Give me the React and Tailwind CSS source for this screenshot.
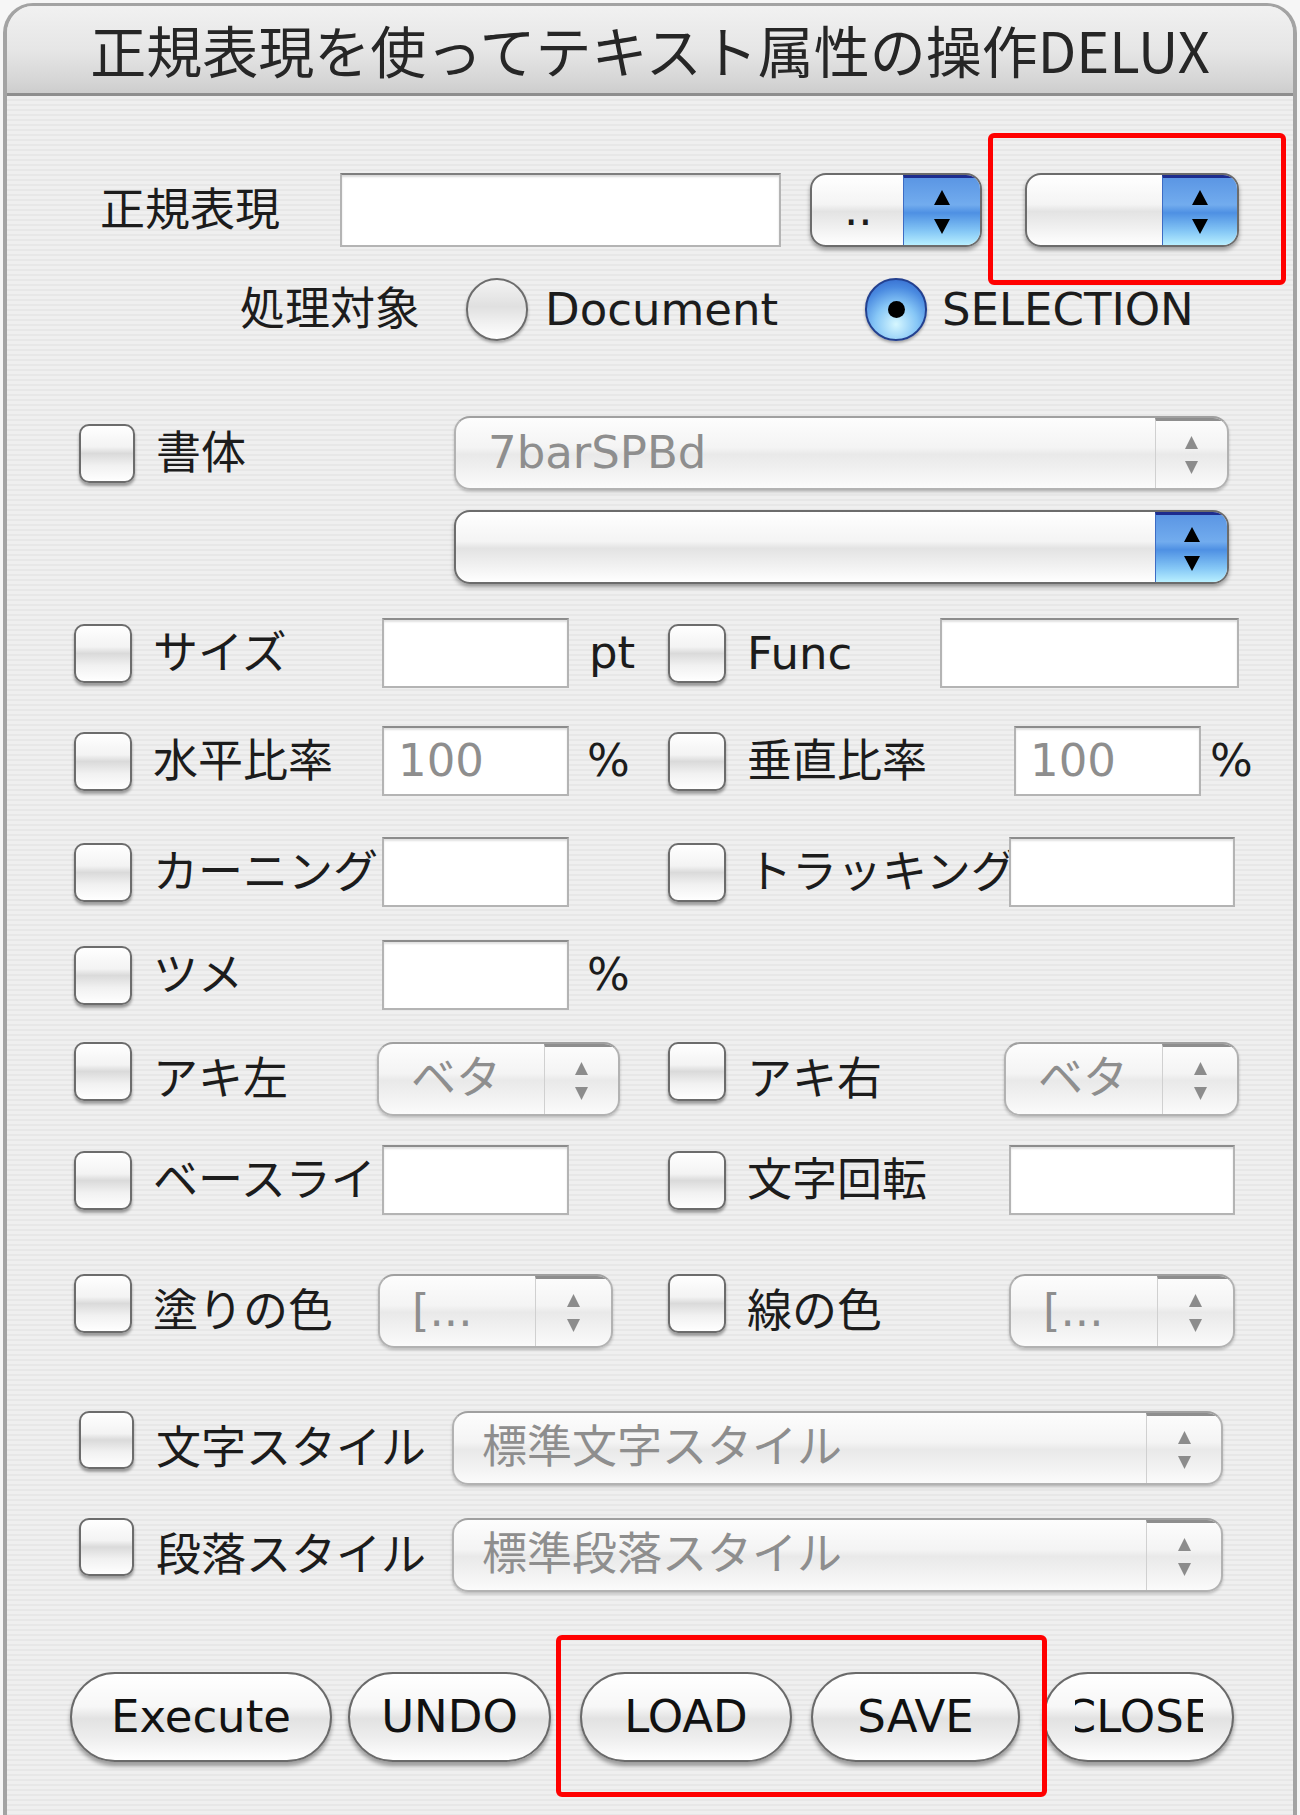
import React from 'react'

const FONT = "font-['DejaVu_Sans','Noto_Sans_CJK_JP',sans-serif]"

function Check({ className = 'w-[58px] h-[59px]', top = false }) {
  return (
    <div
      className={`${className} ${top ? 'self-start' : ''} shrink-0 rounded-[10px] border-2 border-[#6c6c6c] bg-[linear-gradient(180deg,#ffffff_0%,#f3f3f3_38%,#dadada_50%,#f1f1f1_72%,#ffffff_100%)] shadow-[0_3px_3px_rgba(0,0,0,0.35)]`}
    />
  )
}

function Label({ w, children, className = 'ml-[21px]' }) {
  return (
    <div className={`${w} ${className} shrink-0 overflow-hidden whitespace-nowrap text-[45px] leading-[1.4] text-[#1c1c1c]`}>
      {children}
    </div>
  )
}

function Field({ w, value }) {
  return (
    <div
      className={`${w} h-[70px] shrink-0 flex items-center pl-[14px] bg-white border-2 border-[#b4b4b4] border-t-[#8c8c8c] shadow-[inset_0_2px_2px_rgba(0,0,0,0.12)] text-[45px] leading-[1.2] text-[#8e8e8e]`}
    >
      {value}
    </div>
  )
}

function Unit({ children, className }) {
  return <div className={`${className} shrink-0 text-[45px] leading-[1.2] text-[#1c1c1c]`}>{children}</div>
}

function ArrowsActive() {
  return (
    <svg width="18" height="46" viewBox="0 0 18 46">
      <path d="M9 1 L17 16 L1 16 Z" fill="#000" />
      <path d="M1 30 L17 30 L9 45 Z" fill="#000" />
    </svg>
  )
}

function ArrowsDisabled() {
  return (
    <svg width="15" height="42" viewBox="0 0 15 42">
      <path d="M7.5 2 L14 15 L1 15 Z" fill="#8c8c8c" />
      <path d="M1 27 L14 27 L7.5 40 Z" fill="#8c8c8c" />
    </svg>
  )
}

function Popup({ w, text, active = false, arrowW = 'w-[75px]', pad = 'pl-[32px]' }) {
  if (active) {
    return (
      <div
        className={`${w} h-[74px] shrink-0 flex overflow-hidden rounded-[16px] border-2 border-[#6c6c6c] shadow-[0_3px_4px_rgba(0,0,0,0.35)] bg-[linear-gradient(180deg,#ffffff_0%,#f4f4f4_42%,#e3e3e3_52%,#f3f3f3_80%,#ffffff_100%)]`}
      >
        <div className={`flex-1 flex items-center ${pad} text-[45px] leading-[1.3] text-[#1c1c1c] overflow-hidden whitespace-nowrap`}>
          {text}
        </div>
        <div
          className={`${arrowW} shrink-0 flex items-center justify-center border-l border-[#3d6cc4] border-t-[3px] border-t-[#1d2c8e] bg-[linear-gradient(180deg,#5b96e4_0%,#72acee_40%,#4e90e3_52%,#86c8f6_80%,#b8efff_100%)]`}
        >
          <ArrowsActive />
        </div>
      </div>
    )
  }
  return (
    <div
      className={`${w} h-[74px] shrink-0 flex overflow-hidden rounded-[16px] border-2 border-[#b2b2b2] border-t-[#a0a0a0] shadow-[0_2px_3px_rgba(0,0,0,0.2)] bg-[linear-gradient(180deg,#fdfdfd_0%,#f4f4f4_42%,#e9e9e9_52%,#f3f3f3_80%,#fbfbfb_100%)]`}
    >
      <div className={`flex-1 flex items-center ${pad} text-[45px] leading-[1.3] text-[#8e8e8e] overflow-hidden whitespace-nowrap`}>
        {text}
      </div>
      <div className={`${arrowW} shrink-0 flex items-center justify-center border-l border-[#d0d0d0] border-t-[3px] border-t-[#8e8e8e]`}>
        <ArrowsDisabled />
      </div>
    </div>
  )
}

function Radio({ selected }) {
  if (selected) {
    return (
      <div className="w-[62px] h-[63px] shrink-0 rounded-full border-2 border-[#23408f] flex items-center justify-center shadow-[0_2px_3px_rgba(0,0,0,0.3)] bg-[radial-gradient(circle_at_50%_75%,#d6f7ff_0%,#86c6f6_40%,#4a8ae0_70%,#2a5cc6_100%)]">
        <div className="w-[17px] h-[17px] rounded-full bg-black" />
      </div>
    )
  }
  return (
    <div className="w-[62px] h-[63px] shrink-0 rounded-full border-2 border-[#6c6c6c] shadow-[0_2px_3px_rgba(0,0,0,0.3)] bg-[linear-gradient(180deg,#f3f3f3_0%,#e0e0e0_45%,#f2f2f2_75%,#ffffff_100%)]" />
  )
}

function Btn({ w, className = '', children, clip }) {
  return (
    <div
      className={`${w} ${className} h-[90px] shrink-0 flex items-center justify-center rounded-full border-2 border-[#6a6a6a] shadow-[0_4px_4px_rgba(0,0,0,0.35)] bg-[linear-gradient(180deg,#ffffff_0%,#f7f7f7_38%,#e2e2e2_52%,#eeeeee_75%,#ffffff_100%)] text-[45px] leading-[1.3] text-[#111]`}
    >
      {clip ? (
        <div className="w-[128px] flex justify-center overflow-hidden whitespace-nowrap">
          <span className="shrink-0">{children}</span>
        </div>
      ) : (
        children
      )}
    </div>
  )
}

export default function App() {
  return (
    <div className={`${FONT} relative w-[1300px] h-[1815px] overflow-hidden bg-[#f6f6f6] pt-[3px] px-[3px]`}>
      <div className="h-full flex flex-col overflow-hidden rounded-t-[30px] border-x-[4px] border-t-[3px] border-[#a3a3a3] bg-[image:repeating-linear-gradient(180deg,#efefef_0px,#efefef_3px,#e7e7e7_3px,#e7e7e7_5px)]">
        {/* title bar */}
        <div className="h-[90px] shrink-0 flex items-center justify-center border-b-[3px] border-[#8e8e8e] bg-[linear-gradient(180deg,#f1f1f1_0%,#e6e6e6_50%,#d6d6d6_85%,#cdcdcd_100%)]">
          <span className="font-['Noto_Sans_CJK_JP',sans-serif] text-[56px] leading-[1.3] text-[#262626]">
            正規表現を使ってテキスト属性の操作DELUX
          </span>
        </div>

        {/* 正規表現 */}
        <div className="mt-[77px] pl-[93px] flex items-center">
          <Label w="w-[240px]" className="">正規表現</Label>
          <div className="w-[441px] h-[74px] shrink-0 bg-white border-2 border-[#b4b4b4] border-t-[#7e7e7e] shadow-[inset_0_2px_2px_rgba(0,0,0,0.15)]" />
          <div className="ml-[29px]">
            <Popup w="w-[172px]" text=".." active arrowW="w-[77px]" />
          </div>
          <div className="ml-[43px]">
            <Popup w="w-[214px]" text="" active arrowW="w-[75px]" />
          </div>
        </div>

        {/* 処理対象 */}
        <div className="mt-[31px] pl-[233px] flex items-center">
          <Label w="w-[226px]" className="">処理対象</Label>
          <Radio />
          <div className="ml-[17px] w-[320px] shrink-0 text-[45px] leading-[1.2] text-[#1c1c1c]">Document</div>
          <Radio selected />
          <div className="ml-[15px] text-[45px] leading-[1.2] text-[#1c1c1c]">SELECTION</div>
        </div>

        {/* 書体 */}
        <div className="mt-[75px] pl-[72px] flex items-center">
          <Check className="w-[56px] h-[59px]" />
          <Label w="w-[298px]">書体</Label>
          <Popup w="w-[775px]" text="7barSPBd" arrowW="w-[72px]" />
        </div>
        <div className="mt-[20px] pl-[447px] flex items-center">
          <Popup w="w-[775px]" text="" active arrowW="w-[72px]" />
        </div>

        {/* サイズ / Func */}
        <div className="mt-[34px] pl-[67px] flex items-center">
          <div className="w-[594px] shrink-0 flex items-center">
            <Check />
            <Label w="w-[229px]">サイズ</Label>
            <Field w="w-[187px]" />
            <Unit className="ml-[20px]">pt</Unit>
          </div>
          <Check />
          <Label w="w-[193px]">Func</Label>
          <Field w="w-[299px]" />
        </div>

        {/* 水平比率 / 垂直比率 */}
        <div className="mt-[38px] pl-[67px] flex items-center">
          <div className="w-[594px] shrink-0 flex items-center">
            <Check />
            <Label w="w-[229px]">水平比率</Label>
            <Field w="w-[187px]" value="100" />
            <Unit className="ml-[18px]">%</Unit>
          </div>
          <Check />
          <Label w="w-[267px]">垂直比率</Label>
          <Field w="w-[187px]" value="100" />
          <Unit className="ml-[9px]">%</Unit>
        </div>

        {/* カーニング / トラッキング */}
        <div className="mt-[41px] pl-[67px] flex items-center">
          <div className="w-[594px] shrink-0 flex items-center">
            <Check />
            <Label w="w-[229px]">カーニング</Label>
            <Field w="w-[187px]" />
          </div>
          <Check />
          <Label w="w-[262px]">トラッキング</Label>
          <Field w="w-[226px]" />
        </div>

        {/* ツメ */}
        <div className="mt-[33px] pl-[67px] flex items-center">
          <div className="w-[594px] shrink-0 flex items-center">
            <Check />
            <Label w="w-[229px]">ツメ</Label>
            <Field w="w-[187px]" />
            <Unit className="ml-[18px]">%</Unit>
          </div>
        </div>

        {/* アキ左 / アキ右 */}
        <div className="mt-[32px] pl-[67px] flex items-center">
          <div className="w-[594px] shrink-0 flex items-center">
            <Check top />
            <Label w="w-[224px]">アキ左</Label>
            <Popup w="w-[243px]" text="ベタ" arrowW="w-[74px]" />
          </div>
          <Check top />
          <Label w="w-[257px]">アキ右</Label>
          <Popup w="w-[235px]" text="ベタ" arrowW="w-[75px]" />
        </div>

        {/* ベースライン / 文字回転 */}
        <div className="mt-[29px] pl-[67px] flex items-center">
          <div className="w-[594px] shrink-0 flex items-center">
            <Check />
            <Label w="w-[229px]">ベースライン</Label>
            <Field w="w-[187px]" />
          </div>
          <Check />
          <Label w="w-[262px]">文字回転</Label>
          <Field w="w-[226px]" />
        </div>

        {/* 塗りの色 / 線の色 */}
        <div className="mt-[59px] pl-[67px] flex items-center">
          <div className="w-[594px] shrink-0 flex items-center">
            <Check top />
            <Label w="w-[225px]">塗りの色</Label>
            <Popup w="w-[235px]" text="[..." arrowW="w-[76px]" />
          </div>
          <Check top />
          <Label w="w-[262px]">線の色</Label>
          <Popup w="w-[226px]" text="[..." arrowW="w-[76px]" />
        </div>

        {/* 文字スタイル / 段落スタイル */}
        <div className="mt-[63px] pl-[72px] flex items-center">
          <Check className="w-[55px] h-[58px]" top />
          <Label w="w-[296px]" className="ml-[22px]">文字スタイル</Label>
          <Popup w="w-[771px]" text="標準文字スタイル" arrowW="w-[75px]" pad="pl-[28px]" />
        </div>
        <div className="mt-[33px] pl-[72px] flex items-center">
          <Check className="w-[55px] h-[58px]" top />
          <Label w="w-[296px]" className="ml-[22px]">段落スタイル</Label>
          <Popup w="w-[771px]" text="標準段落スタイル" arrowW="w-[75px]" pad="pl-[28px]" />
        </div>

        {/* buttons */}
        <div className="mt-[80px] pl-[63px] flex items-center">
          <Btn w="w-[262px]">Execute</Btn>
          <Btn w="w-[203px]" className="ml-[16px]">UNDO</Btn>
          <Btn w="w-[212px]" className="ml-[29px]">LOAD</Btn>
          <Btn w="w-[209px]" className="ml-[19px]">SAVE</Btn>
          <Btn w="w-[191px]" className="ml-[23px]" clip>CLOSE</Btn>
        </div>
      </div>

      {/* red annotation boxes */}
      <div className="absolute left-[988px] top-[133px] w-[298px] h-[152px] rounded-[6px] border-[5px] border-[#ff0000]" />
      <div className="absolute left-[556px] top-[1635px] w-[491px] h-[162px] rounded-[6px] border-[5px] border-[#ff0000]" />
    </div>
  )
}
